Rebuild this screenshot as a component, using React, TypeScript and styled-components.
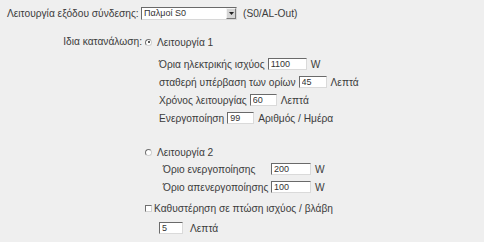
import React, { useState } from 'react';
import styled, { createGlobalStyle } from 'styled-components';

const GlobalStyle = createGlobalStyle`
  html, body {
    margin: 0;
    padding: 0;
    background: #efefef;
  }
  body {
    font-family: "Liberation Sans", Arial, sans-serif;
    font-size: 10.2px;
    color: #3c3c3c;
  }
`;

const Page = styled.div`
  width: 484px;
  height: 242px;
  padding: 6px 0 0 7px;
  box-sizing: border-box;
  overflow: hidden;
`;

const TopRow = styled.div`
  display: flex;
  align-items: center;
  height: 14px;
`;

const TopLabel = styled.span`
  width: 134px;
  white-space: nowrap;
`;

const SelectBox = styled.div`
  display: flex;
  align-items: stretch;
  width: 96px;
  height: 13px;
  box-sizing: border-box;
  background: #fff;
  border: 1px solid;
  border-color: #6a6a6a #d8d8d8 #d8d8d8 #6a6a6a;
`;

const NativeSelect = styled.select`
  flex: 1;
  min-width: 0;
  appearance: none;
  border: 0;
  outline: none;
  background: transparent;
  font-family: "Liberation Sans", Arial, sans-serif;
  font-size: 9px;
  color: #333;
  padding: 0 0 0 2px;
  margin: 0;
  height: 11px;
  line-height: 11px;
`;

const DropButton = styled.span`
  width: 10px;
  display: flex;
  align-items: center;
  justify-content: center;
  background: #d6d6d6;
  border: 1px solid;
  border-color: #f4f4f4 #7a7a7a #7a7a7a #f4f4f4;
  box-sizing: border-box;
`;

const Hint = styled.span`
  margin-left: 6px;
`;

const Section = styled.div`
  display: flex;
  margin-top: 15px;
`;

const SideLabel = styled.div`
  width: 135px;
  text-align: right;
  line-height: 14px;
  height: 14px;
  padding-right: 3px;
  white-space: nowrap;
`;

const Options = styled.div`
  display: flex;
  flex-direction: column;
`;

const ChoiceRow = styled.label<{ $top?: number; $gap?: number }>`
  display: flex;
  align-items: center;
  height: 14px;
  margin-top: ${p => p.$top ?? 0}px;
  gap: ${p => p.$gap ?? 5}px;
  white-space: nowrap;
`;

const Radio = styled.span<{ $on?: boolean }>`
  width: 5px;
  height: 5px;
  border-radius: 50%;
  border: 1px solid;
  border-color: #6f6f6f #cfcfcf #cfcfcf #6f6f6f;
  background: #fff;
  display: flex;
  align-items: center;
  justify-content: center;

  &::after {
    content: '';
    width: 2px;
    height: 2px;
    border-radius: 50%;
    background: ${p => (p.$on ? '#222' : 'transparent')};
  }
`;

const Check = styled.span`
  width: 5px;
  height: 5px;
  border: 1px solid;
  border-color: #6f6f6f #d2d2d2 #d2d2d2 #6f6f6f;
  background: #fff;
`;

const SubList = styled.div<{ $indent: number; $top: number }>`
  display: flex;
  flex-direction: column;
  padding-left: ${p => p.$indent}px;
  margin-top: ${p => p.$top}px;
`;

const FieldRow = styled.div`
  display: flex;
  align-items: center;
  height: 18px;
  white-space: nowrap;
`;

const FieldLabel = styled.span<{ $width?: number }>`
  margin-right: 3px;
  ${p => (p.$width ? `width: ${p.$width}px; margin-right: 0;` : '')}
`;

const TextInput = styled.input<{ $w: number }>`
  width: ${p => p.$w}px;
  height: 12px;
  box-sizing: border-box;
  padding: 0 0 0 2px;
  margin: 0;
  border: 1px solid;
  border-color: #6a6a6a #dadada #dadada #6a6a6a;
  background: #fff;
  font-family: "Liberation Sans", Arial, sans-serif;
  font-size: 9px;
  color: #333;
  outline: none;
`;

const Unit = styled.span<{ $gap?: number }>`
  margin-left: ${p => p.$gap ?? 4}px;
`;

const ArrowIcon = () => (
  <svg width="5" height="3" viewBox="0 0 5 3">
    <path d="M0 0h5L2.5 3z" fill="#222" />
  </svg>
);

const mode1 = [
  { label: 'Όρια ηλεκτρικής ισχύος', value: '1100', w: 39, unit: 'W' },
  { label: 'σταθερή υπέρβαση των ορίων', value: '45', w: 28, unit: 'Λεπτά' },
  { label: 'Χρόνος λειτουργίας', value: '60', w: 27, unit: 'Λεπτά' },
  { label: 'Ενεργοποίηση', value: '99', w: 27, unit: 'Αριθμός / Ημέρα' },
];

const mode2 = [
  { label: 'Όριο ενεργοποίησης', value: '200' },
  { label: 'Όριο απενεργοποίησης', value: '100' },
];

const App: React.FC = () => {
  const [mode, setMode] = useState(1);
  const [delay, setDelay] = useState(false);

  return (
    <Page>
      <GlobalStyle />
      <TopRow>
        <TopLabel>Λειτουργία εξόδου σύνδεσης:</TopLabel>
        <SelectBox>
          <NativeSelect defaultValue="s0">
            <option value="s0">Παλμοί S0</option>
            <option value="al">AL-Out</option>
          </NativeSelect>
          <DropButton>
            <ArrowIcon />
          </DropButton>
        </SelectBox>
        <Hint>(S0/AL-Out)</Hint>
      </TopRow>

      <Section>
        <SideLabel>Ιδια κατανάλωση:</SideLabel>
        <Options>
          <ChoiceRow onClick={() => setMode(1)}>
            <Radio $on={mode === 1} />
            Λειτουργία 1
          </ChoiceRow>
          <SubList $indent={14} $top={6}>
            {mode1.map(f => (
              <FieldRow key={f.label}>
                <FieldLabel>{f.label}</FieldLabel>
                <TextInput $w={f.w} defaultValue={f.value} />
                <Unit>{f.unit}</Unit>
              </FieldRow>
            ))}
          </SubList>

          <ChoiceRow $top={18} onClick={() => setMode(2)}>
            <Radio $on={mode === 2} />
            Λειτουργία 2
          </ChoiceRow>
          <SubList $indent={18} $top={1}>
            {mode2.map(f => (
              <FieldRow key={f.label}>
                <FieldLabel $width={108}>{f.label}</FieldLabel>
                <TextInput $w={40} defaultValue={f.value} />
                <Unit>W</Unit>
              </FieldRow>
            ))}
          </SubList>

          <ChoiceRow $top={5} $gap={2} onClick={() => setDelay(!delay)}>
            <Check />
            Καθυστέρηση σε πτώση ισχύος / βλάβη
          </ChoiceRow>
          <SubList $indent={14} $top={4}>
            <FieldRow>
              <TextInput $w={24} defaultValue="5" />
              <Unit $gap={7}>Λεπτά</Unit>
            </FieldRow>
          </SubList>
        </Options>
      </Section>
    </Page>
  );
};

export default App;
